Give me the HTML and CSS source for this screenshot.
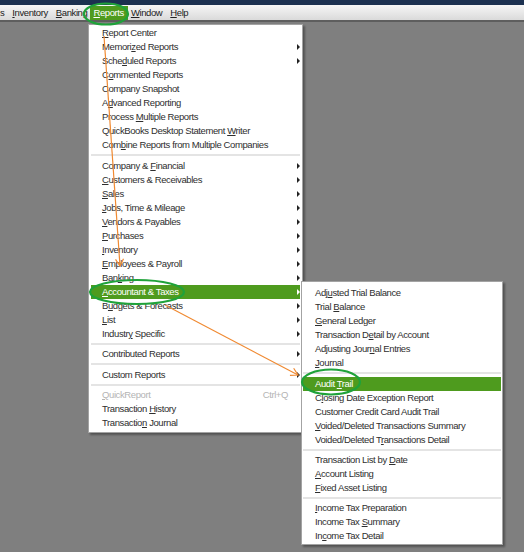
FILE: index.html
```html
<!DOCTYPE html>
<html>
<head>
<meta charset="utf-8">
<link rel="stylesheet" href="styles.css">
</head>
<body>
<div class="titlebar"></div>
<nav class="menubar">
  <span class="mb-item cut">s</span>
  <span class="mb-item"><u>I</u>nventory</span>
  <span class="mb-item"><u>B</u>anking</span>
  <span class="mb-item active"><u>R</u>eports</span>
  <span class="mb-item"><u>W</u>indow</span>
  <span class="mb-item"><u>H</u>elp</span>
</nav>

<div class="menu main-menu">
  <div class="mi"><u>R</u>eport Center</div>
  <div class="mi sub">Memori<u>z</u>ed Reports</div>
  <div class="mi sub">Sche<u>d</u>uled Reports</div>
  <div class="mi">C<u>o</u>mmented Reports</div>
  <div class="mi">Company Snapshot</div>
  <div class="mi">A<u>d</u>vanced Reporting</div>
  <div class="mi">Process <u>M</u>ultiple Reports</div>
  <div class="mi">QuickBooks Desktop Statement <u>W</u>riter</div>
  <div class="mi">Com<u>b</u>ine Reports from Multiple Companies</div>
  <div class="sep"></div>
  <div class="mi sub">Company &amp; <u>F</u>inancial</div>
  <div class="mi sub"><u>C</u>ustomers &amp; Receivables</div>
  <div class="mi sub"><u>S</u>ales</div>
  <div class="mi sub"><u>J</u>obs, Time &amp; Mileage</div>
  <div class="mi sub"><u>V</u>endors &amp; Payables</div>
  <div class="mi sub"><u>P</u>urchases</div>
  <div class="mi sub"><u>I</u>nventory</div>
  <div class="mi sub"><u>E</u>mployees &amp; Payroll</div>
  <div class="mi sub">Ban<u>k</u>ing</div>
  <div class="mi sub hl"><u>A</u>ccountant &amp; Taxes</div>
  <div class="mi sub">B<u>u</u>dgets &amp; Forecasts</div>
  <div class="mi sub"><u>L</u>ist</div>
  <div class="mi sub">Industr<u>y</u> Specific</div>
  <div class="sep tight"></div>
  <div class="mi sub">Contributed Reports</div>
  <div class="sep"></div>
  <div class="mi sub">Custom Reports</div>
  <div class="sep tight"></div>
  <div class="mi disabled"><span><u>Q</u>uickReport</span><span class="shortcut">Ctrl+Q</span></div>
  <div class="mi">Transaction <u>H</u>istory</div>
  <div class="mi">Transactio<u>n</u> Journal</div>
</div>

<div class="menu sub-menu">
  <div class="mi">Adj<u>u</u>sted Trial Balance</div>
  <div class="mi">Trial <u>B</u>alance</div>
  <div class="mi"><u>G</u>eneral Ledger</div>
  <div class="mi">Transaction D<u>e</u>tail by Account</div>
  <div class="mi">Adjusting Jour<u>n</u>al Entries</div>
  <div class="mi"><u>J</u>ournal</div>
  <div class="sep"></div>
  <div class="mi hl">Audit <u>T</u>rail</div>
  <div class="mi">C<u>l</u>osing Date Exception Report</div>
  <div class="mi">Customer Credit Card Audit Trail</div>
  <div class="mi"><u>V</u>oided/Deleted Transactions Summary</div>
  <div class="mi">Voided/Deleted T<u>r</u>ansactions Detail</div>
  <div class="sep tight"></div>
  <div class="mi">Transaction List by <u>D</u>ate</div>
  <div class="mi"><u>A</u>ccount Listing</div>
  <div class="mi"><u>F</u>ixed Asset Listing</div>
  <div class="sep tight"></div>
  <div class="mi"><u>I</u>ncome Tax Preparation</div>
  <div class="mi">Income Tax <u>S</u>ummary</div>
  <div class="mi">In<u>c</u>ome Tax Detail</div>
</div>

<svg class="annot" width="524" height="552" viewBox="0 0 524 552">
  <defs>
    <marker id="ah" markerWidth="10" markerHeight="10" refX="8" refY="5" orient="auto" markerUnits="userSpaceOnUse">
      <path d="M1 1 L8 5 L1 9" fill="none" stroke="#f08a32" stroke-width="1.2"/>
    </marker>
  </defs>
  <ellipse cx="106" cy="14" rx="22" ry="10.5" fill="none" stroke="#1fa23a" stroke-width="2.2"/>
  <ellipse cx="137" cy="292" rx="47" ry="12" fill="none" stroke="#1fa23a" stroke-width="2.2"/>
  <ellipse cx="331" cy="382" rx="29" ry="12.5" fill="none" stroke="#1fa23a" stroke-width="2.2"/>
  <line x1="104" y1="36" x2="120" y2="266" stroke="#f08a32" stroke-width="1.2" marker-end="url(#ah)"/>
  <line x1="165" y1="305" x2="298" y2="375" stroke="#f08a32" stroke-width="1.2" marker-end="url(#ah)"/>
</svg>
</body>
</html>
```

FILE: styles.css
```css
html, body {
  margin: 0;
  padding: 0;
}
body {
  width: 524px;
  height: 552px;
  overflow: hidden;
  position: relative;
  background: #7f7f7f;
  font-family: "Liberation Sans", Arial, sans-serif;
  font-size: 9.5px;
  letter-spacing: -0.4px;
  color: #2e2e2e;
}
u {
  text-decoration: underline;
  text-underline-offset: 1px;
}
.titlebar {
  height: 5px;
  background: #1c3150;
}
.menubar {
  height: 17px;
  box-sizing: border-box;
  display: flex;
  align-items: center;
  background: linear-gradient(#f6f6f6, #dadada);
  border-bottom: 2px solid #5e5e5e;
}
.mb-item {
  padding: 0 4px;
  height: 14px;
  line-height: 14px;
  color: #222;
}
.mb-item.cut {
  padding-left: 0;
}
.mb-item.active {
  background: #4e9b1e;
  color: #fff;
  margin: 0 -1px;
  padding: 0 4px 0 3px;
}
.menu {
  position: absolute;
  box-sizing: border-box;
  background: #fff;
  border: 1px solid #a3a3a3;
  box-shadow: 2px 2px 2px rgba(0, 0, 0, 0.35);
}
.main-menu {
  left: 88px;
  top: 24px;
  width: 215px;
  padding: 1px 2px 2px 2px;
  z-index: 1;
}
.sub-menu {
  left: 301px;
  top: 281px;
  width: 202px;
  padding: 4px 1px 1px 1px;
  z-index: 2;
}
.mi {
  height: 14px;
  line-height: 14px;
  padding-left: 11px;
  position: relative;
  white-space: nowrap;
}
.sub-menu .mi {
  padding-left: 12px;
}
.mi.sub::after {
  content: "";
  position: absolute;
  right: 0;
  top: 4px;
  border-left: 3px solid #222;
  border-top: 3px solid transparent;
  border-bottom: 3px solid transparent;
}
.mi.hl {
  background: #4e9b1e;
  color: #fff;
}
.mi.hl.sub::after {
  border-left-color: #fff;
}
.mi.disabled {
  color: #b4b4b4;
  display: flex;
}
.shortcut {
  margin-left: auto;
  margin-right: 12px;
}
.sep {
  height: 2px;
  background: #e4e4e4;
  margin: 2px 0 3px 0;
}
.sep.tight {
  margin: 2px 0 2px 0;
}
.annot {
  position: absolute;
  left: 0;
  top: 0;
  z-index: 5;
  pointer-events: none;
}
```
